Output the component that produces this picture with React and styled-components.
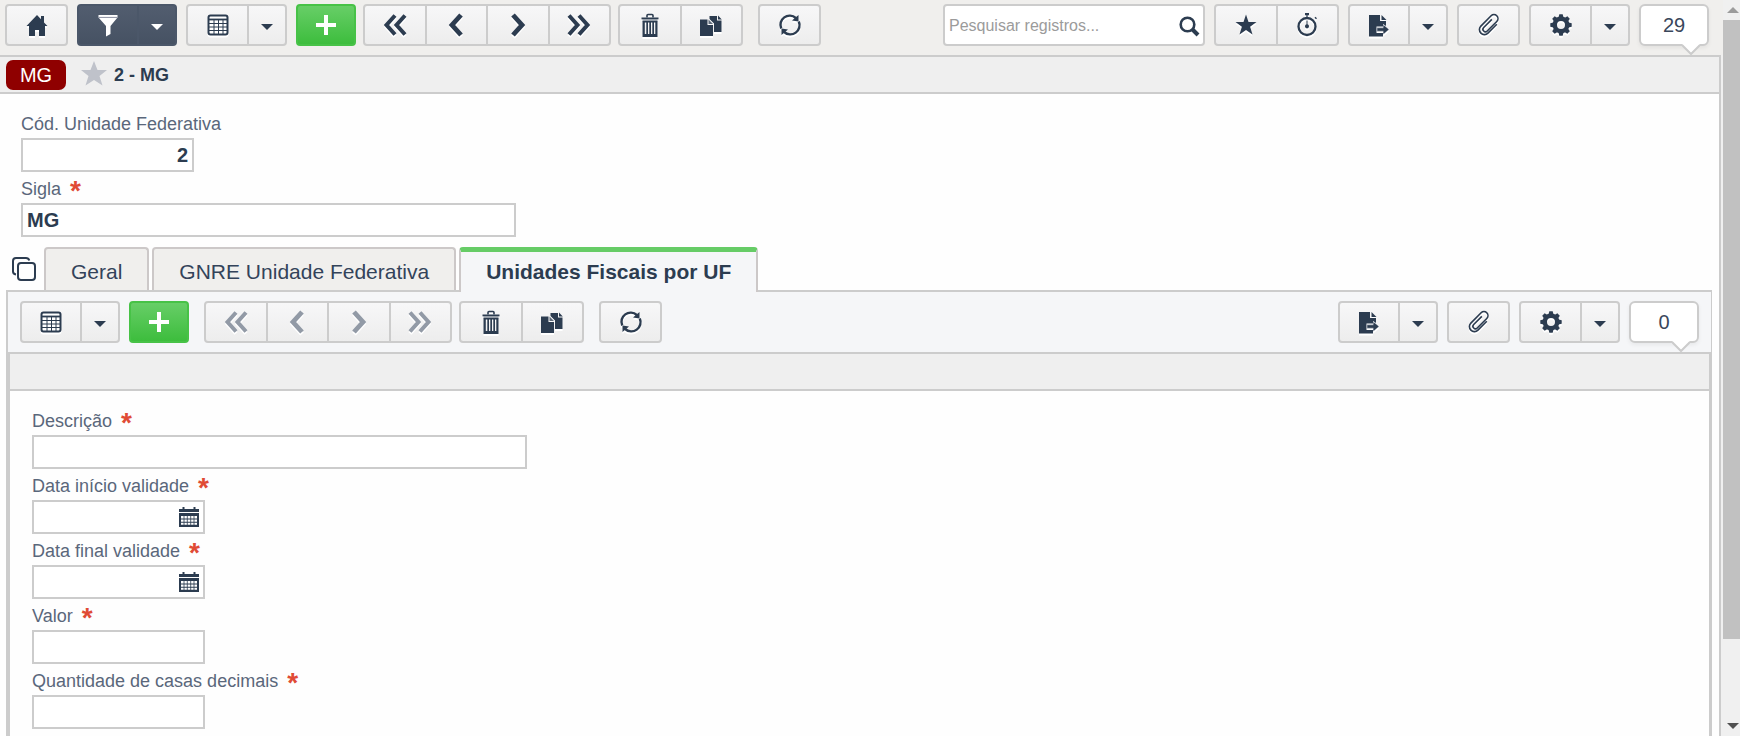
import React from "react";
import styled, { createGlobalStyle, css } from "styled-components";

const ink = "#2c3c50";
const line = "#cccccc";
const chrome = "#f0efed";
const panel = "#f5f6f8";

const GlobalStyle = createGlobalStyle`
  *, *::before, *::after { box-sizing: border-box; }
  body {
    margin: 0;
    background: #fefefe;
    color: ${ink};
    font-family: "Liberation Sans", Arial, sans-serif;
    font-size: 18px;
  }
  button, input { font-family: inherit; color: inherit; }
`;

const Screen = styled.div`
  display: flex;
  height: 100vh;
  overflow: hidden;
  background: #f0f0f0;
`;

const Page = styled.div`
  flex: 1;
  min-width: 0;
  display: flex;
  flex-direction: column;
`;

const Toolbar = styled.div`
  flex: none;
  display: flex;
  justify-content: space-between;
  height: ${(p) => (p.$inner ? 60 : 55)}px;
  padding: ${(p) => (p.$inner ? "9px 12px" : "4px 14px 4px 5px")};
  background: ${(p) => (p.$inner ? panel : chrome)};
`;

const ToolSet = styled.div`
  display: flex;
  gap: ${(p) => p.$gap || 9}px;
`;

const Group = styled.div`
  display: flex;
  height: 42px;
  width: ${(p) => p.$width}px;
`;

const tones = {
  light: css`
    background: linear-gradient(#f7f7f8, #ededed);
    border-color: ${line};
  `,
  dark: css`
    background: linear-gradient(#525d6f, #465263);
    border-color: #4b5769;
    color: #ffffff;
  `,
  green: css`
    background: linear-gradient(#67ce67, #3dbd3d);
    border-color: #47c247;
    color: #ffffff;
  `,
};

const ToolButton = styled.button`
  flex: ${(p) => (p.$caret ? "0 0 38px" : "1 1 0")};
  min-width: 0;
  display: flex;
  align-items: center;
  justify-content: center;
  padding: 0;
  border: 2px solid;
  color: ${ink};
  ${(p) => tones[p.$tone || "light"]}

  & + & { border-left-width: 0; }
  &:first-child { border-top-left-radius: 4px; border-bottom-left-radius: 4px; }
  &:last-child { border-top-right-radius: 4px; border-bottom-right-radius: 4px; }
  &:disabled { color: #929aa6; }
  svg {
    filter: ${(p) => (p.$tone || p.$caret ? "none" : "drop-shadow(0 2px 0 #ffffff)")};
  }
`;

const SearchBox = styled.div`
  display: flex;
  align-items: center;
  width: 262px;
  height: 42px;
  padding: 2px 3px 0 4px;
  border: 2px solid ${line};
  border-radius: 4px;
  background: #ffffff;

  input {
    flex: 1;
    min-width: 0;
    padding: 0;
    border: 0;
    outline: 0;
    background: transparent;
    font-size: 16px;
  }
  input::placeholder { color: #9b9b9b; opacity: 1; }
`;

const IconButton = styled.button`
  display: flex;
  padding: 0;
  border: 0;
  background: transparent;
  color: ${ink};
`;

const Counter = styled.output`
  position: relative;
  display: flex;
  align-items: center;
  justify-content: center;
  width: 70px;
  height: 42px;
  border: 2px solid ${line};
  border-radius: 6px;
  background: #ffffff;
  box-shadow: 0 2px 4px rgba(0, 0, 0, 0.06);
  color: #3a475b;
  font-size: 20px;

  svg { position: absolute; right: 7px; top: 38px; }
`;

const Content = styled.main`
  flex: 1;
  display: flex;
  flex-direction: column;
  margin-right: 2px;
  border-top: 2px solid ${line};
  border-right: 2px solid ${line};
  background: #fefefe;
`;

const RecordBar = styled.div`
  display: flex;
  align-items: center;
  flex: none;
  height: 37px;
  padding-left: 6px;
  border-bottom: 2px solid ${line};
  background: #efefef;
`;

const Badge = styled.span`
  width: 60px;
  margin-right: 14px;
  border-radius: 7px;
  background: #8f0000;
  color: #ffffff;
  font-size: 20px;
  line-height: 30px;
  text-align: center;
`;

const RecordTitle = styled.h1`
  margin: 0 0 0 6px;
  font-size: 18px;
  line-height: 36px;
`;

const Form = styled.form`
  display: flex;
  flex-direction: column;
  align-items: flex-start;
  padding: 13px 21px 10px ${(p) => (p.$inner ? 22 : 21)}px;
`;

const Label = styled.label`
  display: flex;
  gap: 9px;
  height: 31px;
  padding-top: 3px;
  color: #5a677b;
  font-size: 18px;
  line-height: 29px;
`;

const Required = styled.span`
  padding-top: 2px;
  color: #e04b35;
  font-size: 28px;
  font-weight: bold;
  line-height: 28px;
`;

const FieldBox = styled.div`
  display: flex;
  align-items: center;
  width: ${(p) => (p.$wide ? 495 : 173)}px;
  max-width: 100%;
  height: 34px;
  padding: 0 4px;
  border: 2px solid ${line};
  background: #ffffff;

  input {
    flex: 1;
    min-width: 0;
    padding: 0;
    border: 0;
    outline: 0;
    background: transparent;
    font-size: 20px;
    font-weight: bold;
    line-height: 28px;
    text-align: ${(p) => (p.$number ? "right" : "left")};
  }
`;

const TabRow = styled.div`
  display: flex;
  align-items: flex-end;
  gap: 3px;
  padding-left: 12px;

  ${IconButton} { margin: 0 5px 9px 0; }
`;

const Tab = styled.button`
  height: ${(p) => (p["aria-selected"] ? 45 : 43)}px;
  margin-bottom: ${(p) => (p["aria-selected"] ? -2 : 0)}px;
  padding: 5px 25px 0;
  border: 2px solid #ccc8c8;
  border-bottom: 0;
  border-radius: 4px 4px 0 0;
  background: ${chrome};
  color: #33435a;
  font-size: 21px;
  z-index: 1;

  ${(p) =>
    p["aria-selected"] &&
    css`
      padding: 0 25px;
      border-top: 5px solid #66cc66;
      background: ${panel};
      color: ${ink};
      font-weight: bold;
    `}
`;

const Panel = styled.section`
  flex: 1;
  display: flex;
  flex-direction: column;
  margin: 0 7px 0 6px;
  border: solid ${line};
  border-width: 2px 1px 0 2px;
`;

const Detail = styled.div`
  flex: 1;
  border: 2px solid ${line};
  border-bottom: 0;
  background: #fefefe;
`;

const DetailBar = styled.div`
  height: 37px;
  border-bottom: 2px solid ${line};
  background: #efefef;
`;

const ScrollTrack = styled.div`
  flex: 0 0 17px;
  display: flex;
  flex-direction: column;
  align-items: flex-end;
  background: #f0f0f0;
`;

const ScrollArrow = styled.button`
  flex: 0 0 20px;
  width: 17px;
  display: flex;
  align-items: center;
  justify-content: flex-end;
  padding: 0 1px 0 0;
  border: 0;
  background: transparent;
  color: ${(p) => (p.$muted ? "#9c9c9c" : "#505050")};
`;

const ScrollSpace = styled.div`
  flex: 1;
  width: 100%;
`;

const ScrollThumb = styled.div`
  height: 89%;
  background: #c1c1c1;
`;

const Svg = ({ w = 24, h = 24, children }) => (
  <svg width={w} height={h} viewBox={`0 0 ${w} ${h}`} fill="currentColor" aria-hidden="true">
    {children}
  </svg>
);

const Home = () => (
  <Svg>
    <path d="M12 2 1.5 13H4v10h6v-6h4v6h6V13h2.5L19 9.5V3h-3v3.2z" />
  </Svg>
);
const Funnel = () => (
  <Svg>
    <path d="M2.5 2h19v2.5L14.500 13v8L10 23.500V13L2.500 4.500z" />
    <path d="M3 4.400h18" stroke="#8a8ea0" strokeWidth="1" />
  </Svg>
);
const Caret = () => (
  <Svg w={12} h={12}>
    <path d="M0 5h12L6 11z" />
  </Svg>
);
const Grid = () => (
  <Svg>
    <rect x="2.500" y="2.500" width="19" height="19" rx="2" fill="#fff" stroke="currentColor" strokeWidth="2" />
    <path d="M2 6.500h20" fill="none" stroke="currentColor" strokeWidth="1.800" />
    <path d="M8 7v14.500M12.500 7v14.500M17 7v14.500M2 10.500h20M2 14h20M2 17.500h20" fill="none" stroke="currentColor" strokeWidth="1" />
  </Svg>
);
const Plus = () => (
  <Svg>
    <path d="M10 2h4v8h8v4h-8v8h-4v-8H2v-4h8z" />
  </Svg>
);
const Chevrons = ({ double, right }) => (
  <Svg>
    <g fill="none" stroke="currentColor" strokeWidth="4" transform={right ? "matrix(-1 0 0 1 24 0)" : undefined}>
      {double ? <path d="M12 2.500 3.500 12 12 21.500M22 2.500 13.500 12 22 21.500" /> : <path d="M17 2 8 12l9 10" strokeWidth="4.800" />}
    </g>
  </Svg>
);
const Trash = () => (
  <Svg>
    <path d="M9 4.500V2.500q0-1 1-1h4q1 0 1 1v2" fill="none" stroke="currentColor" strokeWidth="1.600" />
    <path d="M3.500 4.500h17v1.800h-17z" />
    <path d="M4.500 6.500h15v2h-15z" opacity=".5" />
    <path d="M4.500 8h15V24h-15zM6.800 9.500V21h1.500V9.500zM10 9.500V21h1.300V9.500zM13 9.500V21h1.300V9.500zM16 9.500V21h1.300V9.500z" fillRule="evenodd" />
  </Svg>
);
const Copy = () => (
  <Svg>
    <path d="M10.500 3h7.500v4.500h4.500V19H15v-8.500L10.500 6z" />
    <path d="M19 2.500 22.800 6.500H19z" />
    <path d="M1 6.500h7.500V12H14v11H1z" />
    <path d="M9.500 6.500 14 11H9.500z" opacity=".75" />
  </Svg>
);
const Refresh = () => (
  <Svg>
    <path d="M3.200 15.500A9.200 9.200 0 0 1 17.800 5M20.800 8.500A9.200 9.200 0 0 1 6.200 19" fill="none" stroke="currentColor" strokeWidth="2.400" />
    <path d="M20.500 2v6.500L14 7.500zM3.500 22v-6.500l6.500 1z" />
  </Svg>
);
const Search = () => (
  <Svg w={22} h={22}>
    <g fill="none" stroke="currentColor">
      <circle cx="9.500" cy="9.500" r="6.800" strokeWidth="2.600" />
      <path d="m14.500 14.500 5.500 5.500" strokeWidth="4" />
    </g>
  </Svg>
);
const Star = () => (
  <Svg>
    <path d="m12 1.500 2.500 7.500h8l-6.400 4.800L18.500 21.500 12 17l-6.500 4.500 2.400-7.700L1.500 9h8z" />
  </Svg>
);
const Stopwatch = () => (
  <Svg>
    <circle cx="12" cy="13.500" r="8.500" fill="none" stroke="currentColor" strokeWidth="2.300" />
    <path d="M10 0h4v2.300h-4zM11.400 2h1.200v3h-1.200zM19.500 4.800l1-1 1.500 1.500-1 1zM11.500 7.500h1v3.800a2 2 0 1 1-1 0z" />
  </Svg>
);
const Export = () => (
  <Svg>
    <path d="M2 2h11v6h6v5l-3-2v2.500H9.500V20H16v3.500H2z" />
    <path d="m14.500 2 5 5h-5z" />
    <path d="M9.500 14.500h6.800v-3l5.700 5-5.700 5v-3H9.500z" fill="#939ba7" />
    <path d="M16.500 12.200 21.500 16.500l-5 4.300v-3h-6v-2.600h6z" />
  </Svg>
);
const Clip = () => (
  <Svg>
    <path
      d="M6 5H-6.500a5 5 0 0 1 0-10H8a4 4 0 0 1 0 8H-5.500a2.500 2.500 0 0 1 0-5H6"
      transform="translate(12 12) rotate(-45)"
      fill="none"
      stroke="currentColor"
      strokeWidth="1.600"
    />
  </Svg>
);
const Gear = () => (
  <Svg>
    <circle cx="12" cy="12" r="6.200" fill="none" stroke="currentColor" strokeWidth="4.400" />
    {[0, 45, 90, 135, 180, 225, 270, 315].map((a) => (
      <path key={a} d="M9.500 4.500 10.300 1.300h3.400l.8 3.200z" transform={`rotate(${a} 12 12)`} />
    ))}
  </Svg>
);
const Layers = () => (
  <Svg>
    <g fill="none" stroke="currentColor" strokeWidth="2">
      <path d="M4 17.500q-3-.5-3-3V4q0-3 3-3h10q2.500 0 3.300 2.500" />
      <rect x="6" y="6" width="17" height="17" rx="3" />
    </g>
  </Svg>
);
const Calendar = () => (
  <Svg w={20} h={20}>
    <path d="M3.500 0h2v2h9V0h2v2H20v3H0V2h3.500zM0 6h20v14H0z" />
    <path d="M2 9h16v2.500H2zM2 12.500h16v2.300H2zM2 15.800h16v2H2z" fill="#fff" />
    <path d="M5 9v9M8.300 9v9M11.700 9v9M15 9v9" stroke="currentColor" strokeWidth=".8" />
  </Svg>
);

const Split = ({ label, icon, tone, width = 101 }) => (
  <Group $width={width}>
    <ToolButton type="button" $tone={tone} aria-label={label}>{icon}</ToolButton>
    <ToolButton type="button" $tone={tone} $caret aria-label={`${label}: opções`}><Caret /></ToolButton>
  </Group>
);

const Single = ({ label, icon, tone, width = 63 }) => (
  <Group $width={width}>
    <ToolButton type="button" $tone={tone} aria-label={label}>{icon}</ToolButton>
  </Group>
);

const Navigation = ({ disabled }) => (
  <Group $width={248}>
    <ToolButton type="button" disabled={disabled} aria-label="Primeiro"><Chevrons double /></ToolButton>
    <ToolButton type="button" disabled={disabled} aria-label="Anterior"><Chevrons /></ToolButton>
    <ToolButton type="button" disabled={disabled} aria-label="Próximo"><Chevrons right /></ToolButton>
    <ToolButton type="button" disabled={disabled} aria-label="Último"><Chevrons double right /></ToolButton>
  </Group>
);

const EditTools = () => (
  <ToolSet $gap={15}>
    <Group $width={125}>
      <ToolButton type="button" aria-label="Excluir"><Trash /></ToolButton>
      <ToolButton type="button" aria-label="Duplicar"><Copy /></ToolButton>
    </Group>
    <Single label="Atualizar" icon={<Refresh />} />
  </ToolSet>
);

const RecordTools = ({ count }) => (
  <>
    <Split label="Exportar" icon={<Export />} width={100} />
    <Single label="Anexos" icon={<Clip />} />
    <Split label="Configurações" icon={<Gear />} />
    <Counter>
      {count}
      <svg width="18" height="12" viewBox="0 0 18 12" aria-hidden="true">
        <path d="M0 0h18L9 10z" fill="#fff" />
        <path d="M0 1l9 9 9-9" fill="none" stroke={line} strokeWidth="2" />
      </svg>
    </Counter>
  </>
);

const Field = ({ id, label, required, value = "", wide, number, date }) => (
  <>
    <Label htmlFor={id}>
      {label}
      {required && <Required>*</Required>}
    </Label>
    <FieldBox $wide={wide} $number={number}>
      <input id={id} type="text" defaultValue={value} required={required} />
      {date && <IconButton type="button" aria-label={`Calendário: ${label}`}><Calendar /></IconButton>}
    </FieldBox>
  </>
);

export default function App() {
  return (
    <>
      <GlobalStyle />
      <Screen>
        <Page>
          <Toolbar>
            <ToolSet>
              <Single label="Início" icon={<Home />} />
              <Split label="Filtro" icon={<Funnel />} tone="dark" width={100} />
              <Split label="Grade" icon={<Grid />} />
              <ToolSet $gap={7}>
                <Single label="Novo" icon={<Plus />} tone="green" width={60} />
                <Navigation />
                <EditTools />
              </ToolSet>
            </ToolSet>
            <ToolSet>
              <SearchBox>
                <input type="search" placeholder="Pesquisar registros..." aria-label="Pesquisar registros" />
                <IconButton type="button" aria-label="Pesquisar"><Search /></IconButton>
              </SearchBox>
              <Group $width={125}>
                <ToolButton type="button" aria-label="Favoritos"><Star /></ToolButton>
                <ToolButton type="button" aria-label="Recentes"><Stopwatch /></ToolButton>
              </Group>
              <RecordTools count={29} />
            </ToolSet>
          </Toolbar>

          <Content>
            <RecordBar>
              <Badge>MG</Badge>
              <IconButton type="button" aria-label="Favoritar">
                <svg width="28" height="30" viewBox="0 0 28 30" fill="#bfc2ca" aria-hidden="true">
                  <path d="m14 1 3.500 9H27l-7.500 6 3 9.500-8.500-5.500-8.500 5.500 3-9.500L1 10h9.500z" />
                </svg>
              </IconButton>
              <RecordTitle>2 - MG</RecordTitle>
            </RecordBar>

            <Form>
              <Field id="codigo" label="Cód. Unidade Federativa" value="2" number />
              <Field id="sigla" label="Sigla" required value="MG" wide />
            </Form>

            <TabRow role="tablist">
              <IconButton type="button" aria-label="Abas"><Layers /></IconButton>
              <Tab type="button" role="tab" aria-selected={false}>Geral</Tab>
              <Tab type="button" role="tab" aria-selected={false}>GNRE Unidade Federativa</Tab>
              <Tab type="button" role="tab" aria-selected>Unidades Fiscais por UF</Tab>
            </TabRow>

            <Panel>
              <Toolbar $inner>
                <ToolSet>
                  <Split label="Grade" icon={<Grid />} width={100} />
                  <ToolSet $gap={15}>
                    <Single label="Novo" icon={<Plus />} tone="green" width={60} />
                    <ToolSet $gap={7}>
                      <Navigation disabled />
                      <EditTools />
                    </ToolSet>
                  </ToolSet>
                </ToolSet>
                <ToolSet>
                  <RecordTools count={0} />
                </ToolSet>
              </Toolbar>
              <Detail>
                <DetailBar />
                <Form $inner>
                  <Field id="descricao" label="Descrição" required wide />
                  <Field id="inicio" label="Data início validade" required date />
                  <Field id="final" label="Data final validade" required date />
                  <Field id="valor" label="Valor" required />
                  <Field id="casas" label="Quantidade de casas decimais" required />
                </Form>
              </Detail>
            </Panel>
          </Content>
        </Page>
        <ScrollTrack>
          <ScrollArrow type="button" $muted aria-label="Rolar para cima">
            <svg width="12" height="6" viewBox="0 0 12 6" fill="currentColor" aria-hidden="true"><path d="M0 6h12L6 0z" /></svg>
          </ScrollArrow>
          <ScrollSpace><ScrollThumb /></ScrollSpace>
          <ScrollArrow type="button" aria-label="Rolar para baixo">
            <svg width="12" height="6" viewBox="0 0 12 6" fill="currentColor" aria-hidden="true"><path d="M0 0h12L6 6z" /></svg>
          </ScrollArrow>
        </ScrollTrack>
      </Screen>
    </>
  );
}
